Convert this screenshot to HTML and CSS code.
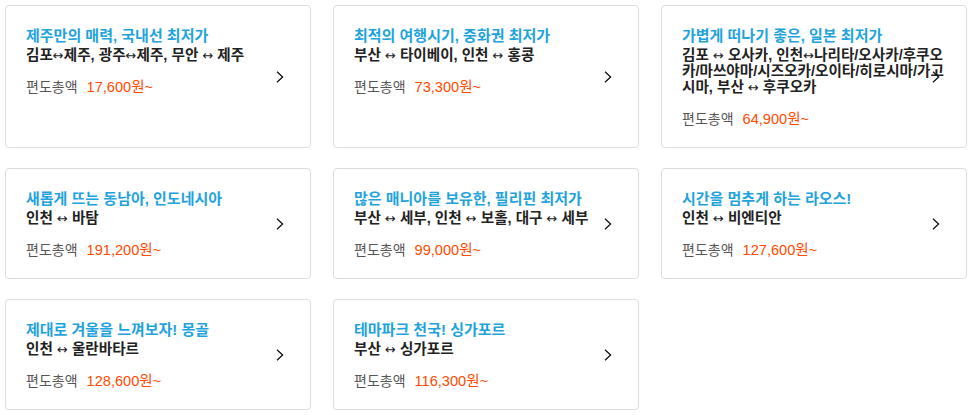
FILE: index.html
```html
<!DOCTYPE html>
<html lang="ko">
<head>
<meta charset="utf-8">
<link rel="stylesheet" href="styles.css">
</head>
<body>
<div class="grid">
  <a class="card" href="#">
    <p class="title">제주만의 매력, 국내선 최저가</p>
    <p class="route">김포<span class="arr">↔</span>제주, 광주<span class="arr">↔</span>제주, 무안 <span class="arr">↔</span> 제주</p>
    <p class="price"><span class="label">편도총액</span><span class="amount">17,600원~</span></p>
    <svg class="chev" viewBox="0 0 8 12" width="8" height="12"><polyline points="1,0.8 6.6,6 1,11.2" fill="none" stroke="#111" stroke-width="1.3"/></svg>
  </a>
  <a class="card" href="#">
    <p class="title">최적의 여행시기, 중화권 최저가</p>
    <p class="route">부산 <span class="arr">↔</span> 타이베이, 인천 <span class="arr">↔</span> 홍콩</p>
    <p class="price"><span class="label">편도총액</span><span class="amount">73,300원~</span></p>
    <svg class="chev" viewBox="0 0 8 12" width="8" height="12"><polyline points="1,0.8 6.6,6 1,11.2" fill="none" stroke="#111" stroke-width="1.3"/></svg>
  </a>
  <a class="card" href="#">
    <p class="title">가볍게 떠나기 좋은, 일본 최저가</p>
    <p class="route">김포 <span class="arr">↔</span> 오사카, 인천<span class="arr">↔</span>나리타/오사카/후쿠오카/마쓰야마/시즈오카/오이타/히로시마/가고시마, 부산 <span class="arr">↔</span> 후쿠오카</p>
    <p class="price"><span class="label">편도총액</span><span class="amount">64,900원~</span></p>
    <svg class="chev" viewBox="0 0 8 12" width="8" height="12"><polyline points="1,0.8 6.6,6 1,11.2" fill="none" stroke="#111" stroke-width="1.3"/></svg>
  </a>
  <a class="card" href="#">
    <p class="title">새롭게 뜨는 동남아, 인도네시아</p>
    <p class="route">인천 <span class="arr">↔</span> 바탐</p>
    <p class="price"><span class="label">편도총액</span><span class="amount">191,200원~</span></p>
    <svg class="chev" viewBox="0 0 8 12" width="8" height="12"><polyline points="1,0.8 6.6,6 1,11.2" fill="none" stroke="#111" stroke-width="1.3"/></svg>
  </a>
  <a class="card" href="#">
    <p class="title">많은 매니아를 보유한, 필리핀 최저가</p>
    <p class="route">부산 <span class="arr">↔</span> 세부, 인천 <span class="arr">↔</span> 보홀, 대구 <span class="arr">↔</span> 세부</p>
    <p class="price"><span class="label">편도총액</span><span class="amount">99,000원~</span></p>
    <svg class="chev" viewBox="0 0 8 12" width="8" height="12"><polyline points="1,0.8 6.6,6 1,11.2" fill="none" stroke="#111" stroke-width="1.3"/></svg>
  </a>
  <a class="card" href="#">
    <p class="title">시간을 멈추게 하는 라오스!</p>
    <p class="route">인천 <span class="arr">↔</span> 비엔티안</p>
    <p class="price"><span class="label">편도총액</span><span class="amount">127,600원~</span></p>
    <svg class="chev" viewBox="0 0 8 12" width="8" height="12"><polyline points="1,0.8 6.6,6 1,11.2" fill="none" stroke="#111" stroke-width="1.3"/></svg>
  </a>
  <a class="card" href="#">
    <p class="title">제대로 겨울을 느껴보자! 몽골</p>
    <p class="route">인천 <span class="arr">↔</span> 울란바타르</p>
    <p class="price"><span class="label">편도총액</span><span class="amount">128,600원~</span></p>
    <svg class="chev" viewBox="0 0 8 12" width="8" height="12"><polyline points="1,0.8 6.6,6 1,11.2" fill="none" stroke="#111" stroke-width="1.3"/></svg>
  </a>
  <a class="card" href="#">
    <p class="title">테마파크 천국! 싱가포르</p>
    <p class="route">부산 <span class="arr">↔</span> 싱가포르</p>
    <p class="price"><span class="label">편도총액</span><span class="amount">116,300원~</span></p>
    <svg class="chev" viewBox="0 0 8 12" width="8" height="12"><polyline points="1,0.8 6.6,6 1,11.2" fill="none" stroke="#111" stroke-width="1.3"/></svg>
  </a>
</div>
</body>
</html>
```
FILE: styles.css
```css
* { box-sizing: border-box; }
html, body { margin: 0; padding: 0; background: #fff; }
body {
  font-family: "Liberation Sans", "Noto Sans CJK KR", sans-serif;
  font-size: 14px;
  color: #222;
}
.grid {
  display: grid;
  grid-template-columns: repeat(3, 306px);
  column-gap: 22px;
  row-gap: 20px;
  padding: 5px;
}
.card {
  position: relative;
  display: block;
  border: 1px solid #dcdcdc;
  border-radius: 4px;
  padding: 20px 20px 18px 20px;
  text-decoration: none;
  color: inherit;
}
.card p { margin: 0; }
.title {
  color: #1ea3dd;
  font-weight: 700;
  font-size: 15px;
  line-height: 18px;
  height: 20px;
  padding-top: 1px;
}
.route {
  margin-top: 1px !important;
  color: #222;
  font-weight: 700;
  font-size: 14.6px;
  line-height: 16px;
  word-break: break-all;
}
.arr {
  font-family: "DejaVu Sans", sans-serif;
  font-weight: 400;
  font-size: 13px;
  line-height: 8px;
}
.price {
  margin-top: 14px !important;
  height: 20px;
  display: flex;
  align-items: center;
  gap: 9px;
}
.label {
  color: #555;
  font-size: 14px;
  line-height: 18px;
}
.amount {
  color: #ff4a00;
  font-size: 14.6px;
  font-weight: 400;
  line-height: 18px;
}
.chev {
  position: absolute;
  right: 26px;
  top: 50%;
  margin-top: -6px;
}
```
